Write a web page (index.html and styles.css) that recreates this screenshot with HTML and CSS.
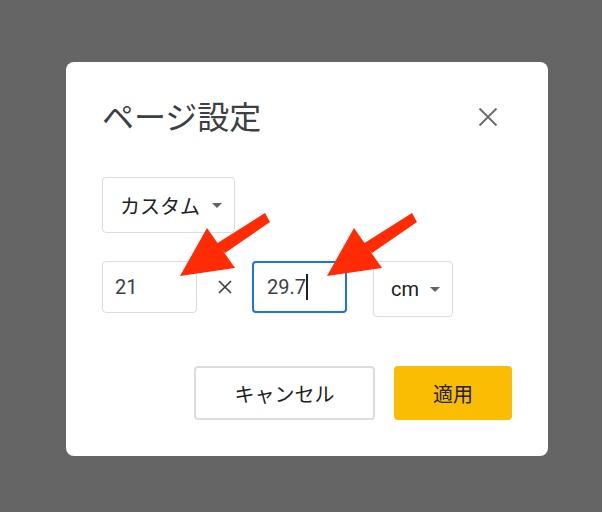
FILE: index.html
```html
<!DOCTYPE html>
<html lang="ja">
<head>
<meta charset="utf-8">
<link rel="stylesheet" href="styles.css">
</head>
<body>
<div class="dialog">
  <div class="header">
    <h1 class="title">ページ設定</h1>
    <button class="close" aria-label="閉じる">
      <svg width="20" height="20" viewBox="0 0 20 20"><path d="M1.5 1.5 L18.5 18.5 M18.5 1.5 L1.5 18.5" stroke="#6f6f6f" stroke-width="2" fill="none"/></svg>
    </button>
  </div>
  <div class="select preset">
    <span>カスタム</span><span class="caret-down"></span>
  </div>
  <div class="size-row">
    <div class="input">21</div>
    <span class="times">
      <svg width="14" height="14" viewBox="0 0 14 14"><path d="M1 1 L13 13 M13 1 L1 13" stroke="#3c4043" stroke-width="1.7" fill="none"/></svg>
    </span>
    <div class="input focused">29.7<span class="text-caret"></span></div>
    <div class="select unit">
      <span>cm</span><span class="caret-down"></span>
    </div>
  </div>
  <div class="actions">
    <button class="btn cancel">キャンセル</button>
    <button class="btn apply">適用</button>
  </div>
</div>
<svg class="arrows" width="602" height="512" viewBox="0 0 602 512">
  <g fill="#ff2b05" stroke="none">
    <polygon points="180,276 207,228 235,268"/>
    <polygon points="265,213 270,222 225,253 216,244"/>
    <polygon points="327,276 354,228 382,268"/>
    <polygon points="412,213 417,222 372,253 363,244"/>
  </g>
</svg>
</body>
</html>
```

FILE: styles.css
```css
html, body {
  margin: 0;
  padding: 0;
}
body {
  background: #656565;
  width: 602px;
  height: 512px;
  overflow: hidden;
  position: relative;
  font-family: Roboto, "Noto Sans CJK JP", sans-serif;
  color: #3c4043;
}
.dialog {
  box-sizing: border-box;
  margin: 62px 0 0 66px;
  width: 482px;
  height: 394px;
  background: #fff;
  border-radius: 8px;
  padding: 36px 36px 36px 36px;
  display: flex;
  flex-direction: column;
  align-items: flex-start;
}
.header {
  align-self: stretch;
  display: flex;
  justify-content: space-between;
  align-items: center;
  height: 40px;
}
.title {
  margin: 0;
  font-weight: 400;
  font-size: 32px;
  line-height: 40px;
  color: #3c4043;
}
.close {
  border: 0;
  background: none;
  padding: 0;
  margin-right: 14px;
  margin-top: -2px;
  width: 20px;
  height: 20px;
  display: flex;
  align-items: center;
  justify-content: center;
}
.select {
  box-sizing: border-box;
  height: 56px;
  border: 1px solid #dadce0;
  border-radius: 4px;
  display: flex;
  align-items: center;
  font-size: 20px;
  color: #202124;
}
.preset {
  margin-top: 39px;
  width: 133px;
  padding: 0 12px 0 17px;
  justify-content: space-between;
}
.caret-down {
  width: 0;
  height: 0;
  border-left: 5px solid transparent;
  border-right: 5px solid transparent;
  border-top: 5px solid #5f6368;
}
.size-row {
  margin-top: 28px;
  display: flex;
  align-items: flex-start;
}
.input {
  box-sizing: border-box;
  width: 95px;
  height: 52px;
  border: 1px solid #dadce0;
  border-radius: 4px;
  padding: 0 12px;
  display: flex;
  align-items: center;
  font-size: 20px;
  color: #3c4043;
}
.input.focused {
  border: 2px solid #1a73e8;
  padding: 0 13px;
}
.text-caret {
  display: inline-block;
  width: 2px;
  height: 26px;
  background: #202124;
  margin-left: 0;
}
.times {
  width: 55px;
  height: 52px;
  display: flex;
  align-items: center;
  justify-content: center;
}
.unit {
  margin-left: 26px;
  width: 80px;
  padding: 0 12px 0 17px;
  justify-content: space-between;
}
.actions {
  align-self: stretch;
  margin-top: 49px;
  display: flex;
  justify-content: flex-end;
  gap: 19px;
}
.btn {
  box-sizing: border-box;
  height: 54px;
  border-radius: 4px;
  font-family: Roboto, "Noto Sans CJK JP", sans-serif;
  font-size: 20px;
  color: #202124;
  padding: 0;
}
.cancel {
  width: 181px;
  background: #fff;
  border: 2px solid #dadce0;
}
.apply {
  width: 118px;
  background: #fbbc04;
  border: 0;
}
.arrows {
  position: absolute;
  left: 0;
  top: 0;
  pointer-events: none;
}
```
